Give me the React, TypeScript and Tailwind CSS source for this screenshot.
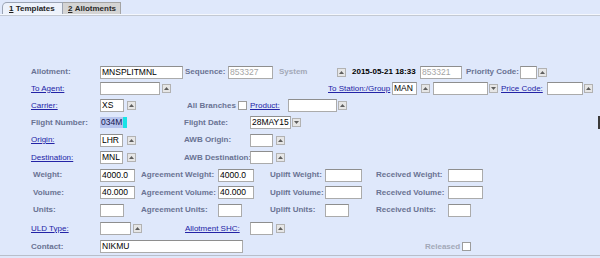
import React from 'react';

type Kids = { children?: React.ReactNode };

const Label = ({ w, children, link, muted }: Kids & { w: string; link?: boolean; muted?: boolean }) => (
  <div
    className={`${w} shrink-0 whitespace-nowrap text-[8px] leading-none ${
      link ? 'text-[#2323a6] underline' : muted ? 'font-bold text-[#a3a8b8]' : 'font-bold text-[#6a7393]'
    }`}
  >
    {children}
  </div>
);

const Field = ({ w, value, muted }: { w: string; value?: string; muted?: boolean }) => (
  <div
    className={`${w} h-[13px] shrink-0 flex items-center px-[1px] overflow-hidden whitespace-nowrap bg-white border border-[#ababab] border-t-[#8e8e8e] text-[8.5px] leading-none ${
      muted ? 'text-[#a4a4a4]' : 'text-black'
    }`}
  >
    {value}
  </div>
);

const Btn = ({ down }: { down?: boolean }) => (
  <div className="w-[9px] h-[9px] shrink-0 flex items-center justify-center bg-[#e6e6e6] border border-[#b2b2b2]">
    <svg width="5" height="3" viewBox="0 0 5 3">
      <path d={down ? 'M0 0H5L2.5 3Z' : 'M0 3H5L2.5 0Z'} fill="#5e5e5e" />
    </svg>
  </div>
);

const Check = () => <div className="w-[9px] h-[9px] shrink-0 bg-white border border-[#9c9c9c]" />;

export default function App() {
  return (
    <div className="relative w-[600px] h-[258px] overflow-hidden bg-[#dfe8fb] font-['Liberation_Sans',Arial,sans-serif]">
      {/* Tabs */}
      <div className="h-[14px] flex items-end pl-[2px]">
        <div className="w-[61px] h-[12px] flex items-center pl-[6px] bg-[#edf2fb] border border-b-0 border-[#9ba4b4] rounded-tl-[5px] text-[8px] font-bold text-[#1e1e1e] leading-none">
          <span className="underline">1</span>&nbsp;Templates
        </div>
        <div className="w-[58px] h-[12px] flex items-center pl-[5px] bg-[#d4d4d4] border border-b-0 border-l-0 border-[#a4a4a4] text-[8px] font-bold text-[#2a2a2a] leading-none">
          <span className="underline">2</span>&nbsp;Allotments
        </div>
      </div>
      <div className="h-[1px] bg-[#f4f7fd]" />
      <div className="h-[1px] bg-[#c3c9d3]" />

      {/* Form */}
      <div className="pt-[48px] border-b border-[#b9bfca]">
        <div className="flex items-center h-[16px] pl-[31px]">
          <Label w="w-[69px]">Allotment:</Label>
          <Field w="w-[83px]" value="MNSPLITMNL" />
          <Label w="w-[43px] ml-[2px]">Sequence:</Label>
          <Field w="w-[45px]" value="853327" muted />
          <Label w="w-[58px] ml-[6px]" muted>System</Label>
          <Btn />
          <div className="w-[68px] ml-[6px] shrink-0 text-[8px] font-bold text-black leading-none whitespace-nowrap">2015-05-21 18:33</div>
          <Field w="w-[42px]" value="853321" muted />
          <Label w="w-[54px] ml-[4px]">Priority Code:</Label>
          <Field w="w-[17px]" />
          <div className="ml-[1px]"><Btn /></div>
        </div>

        <div className="flex items-center h-[17px] pl-[31px]">
          <Label w="w-[69px]" link>To Agent:</Label>
          <Field w="w-[60px]" />
          <div className="ml-[2px]"><Btn /></div>
          <Label w="w-[64px] ml-[157px]" link>To Station:/Group</Label>
          <Field w="w-[25px]" value="MAN" />
          <div className="ml-[4px]"><Btn /></div>
          <Field w="w-[55px] ml-[3px]" />
          <div className="ml-[1px]"><Btn down /></div>
          <Label w="w-[46px] ml-[3px]" link>Price Code:</Label>
          <Field w="w-[36px]" />
          <div className="ml-[1px]"><Btn /></div>
        </div>

        <div className="flex items-center h-[17px] pl-[31px]">
          <Label w="w-[69px]" link>Carrier:</Label>
          <Field w="w-[24px]" value="XS" />
          <div className="ml-[3px]"><Btn /></div>
          <Label w="w-[50px] ml-[51px]">All Branches</Label>
          <div className="ml-[1px]"><Check /></div>
          <Label w="w-[38px] ml-[3px]" link>Product:</Label>
          <Field w="w-[49px]" />
          <div className="ml-[1px]"><Btn /></div>
        </div>

        <div className="flex items-center h-[17px] pl-[31px]">
          <Label w="w-[69px]">Flight Number:</Label>
          <div className="w-[27px] h-[12px] shrink-0 flex items-center">
            <span className="h-[11px] flex items-center px-[1px] bg-[#b7c5ee] text-[8.5px] text-[#141450] leading-none">034M</span>
            <span className="w-[5px] h-[11px] bg-[#19e3e6]" />
          </div>
          <Label w="w-[66px] ml-[57px]">Flight Date:</Label>
          <Field w="w-[41px]" value="28MAY15" />
          <div className="ml-[1px]"><Btn down /></div>
        </div>

        <div className="flex items-center h-[18px] pl-[31px]">
          <Label w="w-[69px]" link>Origin:</Label>
          <Field w="w-[23px]" value="LHR" />
          <div className="ml-[4px]"><Btn /></div>
          <Label w="w-[66px] ml-[48px]">AWB Origin:</Label>
          <Field w="w-[23px]" />
          <div className="ml-[3px]"><Btn /></div>
        </div>

        <div className="flex items-center h-[17px] pl-[31px]">
          <Label w="w-[69px]" link>Destination:</Label>
          <Field w="w-[23px]" value="MNL" />
          <div className="ml-[4px]"><Btn /></div>
          <Label w="w-[66px] ml-[48px]">AWB Destination:</Label>
          <Field w="w-[23px]" />
          <div className="ml-[3px]"><Btn /></div>
        </div>

        <div className="flex items-center h-[18px] pl-[33px]">
          <Label w="w-[67px]">Weight:</Label>
          <Field w="w-[35px]" value="4000.0" />
          <Label w="w-[77px] ml-[6px]">Agreement Weight:</Label>
          <Field w="w-[36px]" value="4000.0" />
          <Label w="w-[55px] ml-[16px]">Uplift Weight:</Label>
          <Field w="w-[37px]" />
          <Label w="w-[72px] ml-[14px]">Received Weight:</Label>
          <Field w="w-[35px]" />
        </div>

        <div className="flex items-center h-[17px] pl-[33px]">
          <Label w="w-[67px]">Volume:</Label>
          <Field w="w-[35px]" value="40.000" />
          <Label w="w-[77px] ml-[6px]">Agreement Volume:</Label>
          <Field w="w-[36px]" value="40.000" />
          <Label w="w-[55px] ml-[16px]">Uplift Volume:</Label>
          <Field w="w-[37px]" />
          <Label w="w-[72px] ml-[14px]">Received Volume:</Label>
          <Field w="w-[35px]" />
        </div>

        <div className="flex items-center h-[18px] pl-[33px]">
          <Label w="w-[67px]">Units:</Label>
          <Field w="w-[24px]" />
          <Label w="w-[77px] ml-[17px]">Agreement Units:</Label>
          <Field w="w-[24px]" />
          <Label w="w-[55px] ml-[28px]">Uplift Units:</Label>
          <Field w="w-[24px]" />
          <Label w="w-[72px] ml-[27px]">Received Units:</Label>
          <Field w="w-[23px]" />
        </div>

        <div className="flex items-center h-[19px] pl-[31px]">
          <Label w="w-[69px]" link>ULD Type:</Label>
          <Field w="w-[31px]" />
          <div className="ml-[2px]"><Btn /></div>
          <Label w="w-[65px] ml-[43px]" link>Allotment SHC:</Label>
          <Field w="w-[23px]" />
          <div className="ml-[3px]"><Btn /></div>
        </div>

        <div className="flex items-center h-[17px] pl-[31px]">
          <Label w="w-[69px]">Contact:</Label>
          <Field w="w-[143px]" value="NIKMU" />
          <Label w="w-[37px] ml-[182px]" muted>Released</Label>
          <Check />
        </div>
      </div>

      {/* caret mark at right edge */}
      <div className="absolute right-0 top-[116px] w-[2px] h-[13px] bg-[#3a3a3a]" />
    </div>
  );
}
